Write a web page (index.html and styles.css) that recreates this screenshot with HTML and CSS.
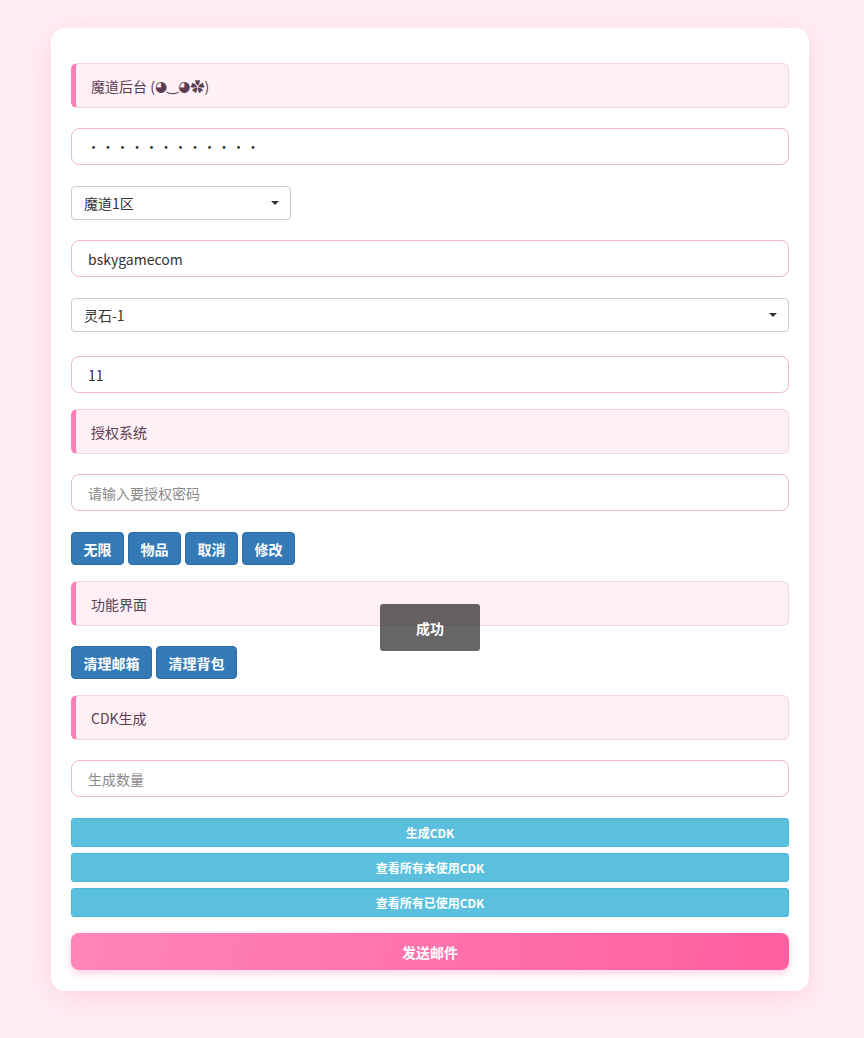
FILE: index.html
```html
<!DOCTYPE html>
<html lang="zh">
<head>
<meta charset="utf-8">
<title>魔道后台</title>
<link rel="stylesheet" href="styles.css">
</head>
<body>
<div class="card">
  <div class="section-title">魔道后台&nbsp;(<span class="kao">◕‿◕</span>✿)</div>
  <input class="field" type="password" value="123456789012">
  <div class="select-wrap small"><select class="select"><option>魔道1区</option></select></div>
  <input class="field" type="text" value="bskygamecom">
  <div class="select-wrap tall-gap"><select class="select"><option>灵石-1</option></select></div>
  <input class="field end" type="text" value="11">
  <div class="section-title">授权系统</div>
  <input class="field" type="text" placeholder="请输入要授权密码">
  <div class="btn-row">
    <button class="btn blue">无限</button>
    <button class="btn blue">物品</button>
    <button class="btn blue">取消</button>
    <button class="btn blue">修改</button>
  </div>
  <div class="section-title">功能界面</div>
  <div class="btn-row">
    <button class="btn blue">清理邮箱</button>
    <button class="btn blue">清理背包</button>
  </div>
  <div class="section-title">CDK生成</div>
  <input class="field" type="text" placeholder="生成数量">
  <div class="cdk-list">
    <button class="btn cyan">生成CDK</button>
    <button class="btn cyan">查看所有未使用CDK</button>
    <button class="btn cyan">查看所有已使用CDK</button>
  </div>
  <button class="send">发送邮件</button>
  <div class="toast">成功</div>
</div>
</body>
</html>
```
FILE: styles.css
```css
* { box-sizing: border-box; }
html, body { margin: 0; padding: 0; }
body {
  background: #ffeef4;
  font-family: "Noto Sans CJK SC", "Noto Sans", sans-serif;
  font-size: 14px;
  color: #333;
  padding: 28px 0 0;
  min-height: 1038px;
}
.card {
  position: relative;
  width: 758px;
  margin: 0 auto 0 51px;
  background: #fff;
  border-radius: 14px;
  padding: 35px 20px 21px;
  box-shadow: 0 6px 26px rgba(255, 140, 180, 0.28);
  display: flex;
  flex-direction: column;
}
.section-title {
  height: 45px;
  background: #fff0f6;
  border: 1px solid #f0d6e0;
  border-left: 5px solid #ff7eb6;
  border-radius: 6px;
  padding: 0 0 0 15px;
  display: flex;
  align-items: center;
  color: #5c3d55;
  font-size: 14px;
  margin-bottom: 20px;
  white-space: pre;
}
.kao { font-family: "DejaVu Sans", sans-serif; font-size: 14px; }
.field {
  height: 37px;
  width: 100%;
  border: 1px solid #f0b8c8;
  border-radius: 8px;
  padding: 0 16px;
  font-family: inherit;
  font-size: 14px;
  color: #333;
  background: #fff;
  margin: 0 0 21px;
  outline: none;
}
.field[type="password"] { letter-spacing: 1.5px; font-size: 13px; padding-left: 15px; }
.field::placeholder { color: #8a8a8a; }
.field.end { margin-bottom: 16px; }
.select-wrap {
  position: relative;
  margin-bottom: 20px;
}
.select-wrap.small { width: 220px; }
.select-wrap.tall-gap { margin-bottom: 24px; }
.select-wrap::after {
  content: "";
  position: absolute;
  right: 12px;
  top: 15px;
  border-left: 4px solid transparent;
  border-right: 4px solid transparent;
  border-top: 4px solid #333;
}
.select {
  -webkit-appearance: none;
  appearance: none;
  width: 100%;
  height: 34px;
  border: 1px solid #ccc;
  border-radius: 4px;
  background: #fff;
  padding: 0 12px;
  font-family: inherit;
  font-size: 14px;
  color: #333;
}
.btn-row {
  display: flex;
  gap: 4px;
  margin-bottom: 16px;
}
.btn {
  font-family: inherit;
  font-weight: 700;
  color: #fff;
  cursor: pointer;
}
.blue {
  height: 33px;
  background: #337ab7;
  border: 1px solid #2e6da4;
  border-radius: 4px;
  padding: 0 11.5px;
  font-size: 14px;
}
.cdk-list {
  display: flex;
  flex-direction: column;
  gap: 6px;
  margin-bottom: 16px;
}
.cyan {
  height: 29px;
  width: 100%;
  background: #5bc0de;
  border: 1px solid #46b8da;
  border-radius: 3px;
  font-size: 12px;
}
.send {
  height: 37px;
  width: 100%;
  border: none;
  border-radius: 8px;
  background: linear-gradient(100deg, #ff85b8, #ff5f9f);
  color: #fff;
  font-family: inherit;
  font-weight: 700;
  font-size: 14px;
  box-shadow: 0 3px 8px rgba(255, 95, 160, 0.3);
}
.toast {
  position: absolute;
  left: 329px;
  top: 576px;
  width: 100px;
  height: 47px;
  background: rgba(0, 0, 0, 0.6);
  color: #fff;
  font-weight: 700;
  font-size: 14px;
  display: flex;
  align-items: center;
  justify-content: center;
  border-radius: 3px;
}
```
